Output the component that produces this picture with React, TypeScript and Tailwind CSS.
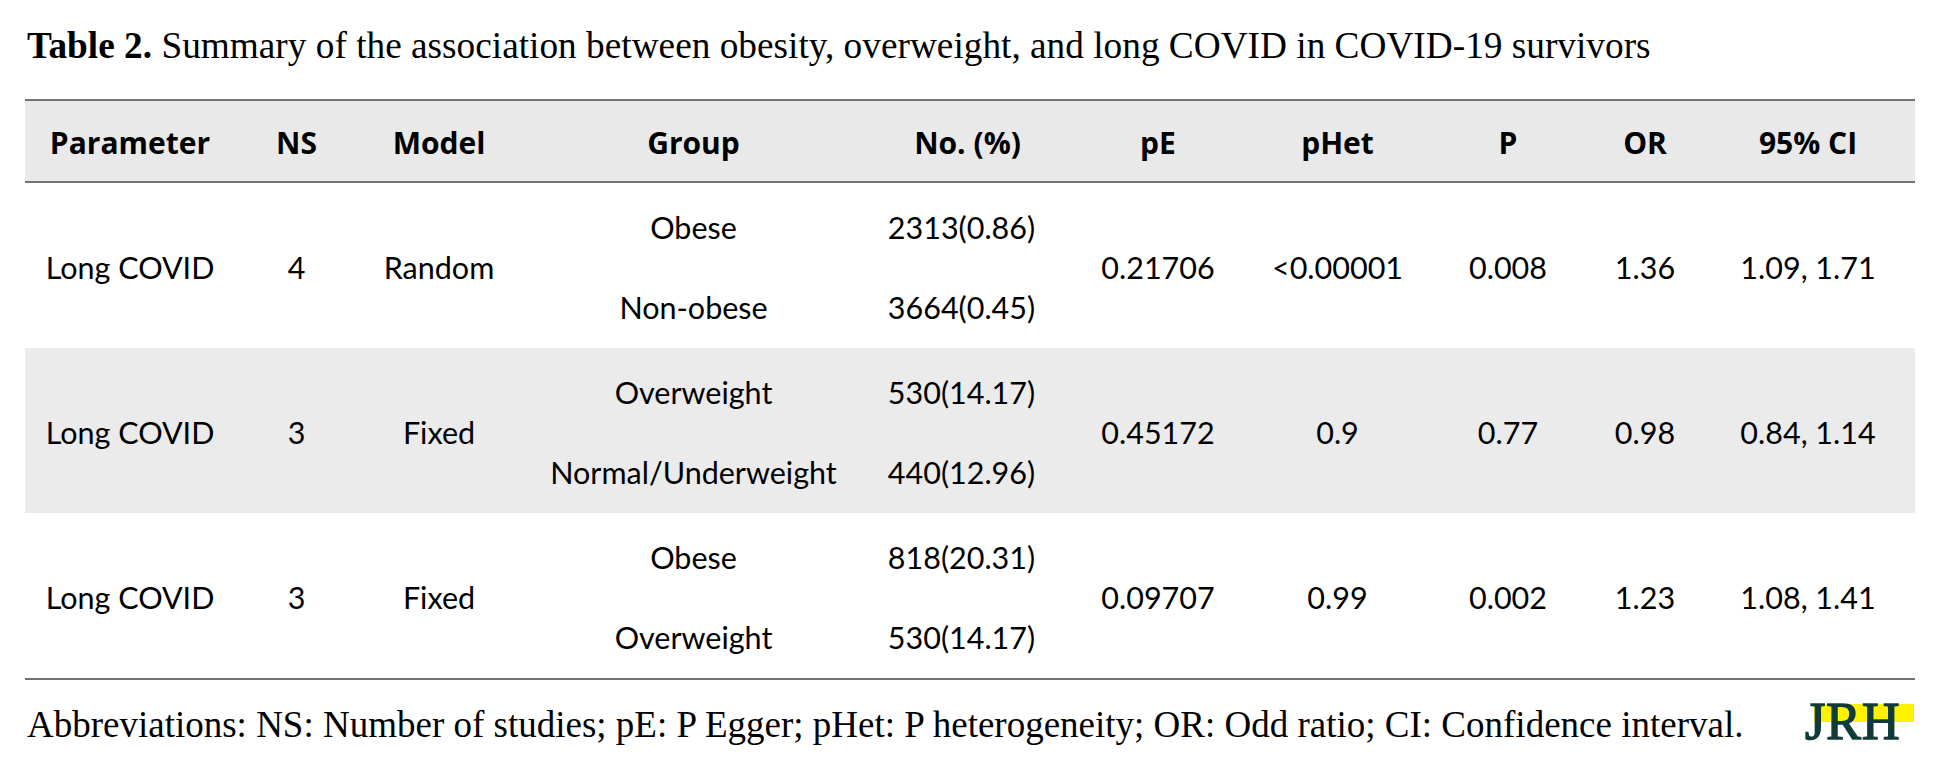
import React from "react";

type Row = {
  param: string;
  ns: string;
  model: string;
  groups: [string, string][];
  pe: string;
  phet: string;
  p: string;
  or: string;
  ci: string;
  shaded: boolean;
};

const rows: Row[] = [
  {
    param: "Long COVID",
    ns: "4",
    model: "Random",
    groups: [
      ["Obese", "2313(0.86)"],
      ["Non-obese", "3664(0.45)"],
    ],
    pe: "0.21706",
    phet: "<0.00001",
    p: "0.008",
    or: "1.36",
    ci: "1.09, 1.71",
    shaded: false,
  },
  {
    param: "Long COVID",
    ns: "3",
    model: "Fixed",
    groups: [
      ["Overweight", "530(14.17)"],
      ["Normal/Underweight", "440(12.96)"],
    ],
    pe: "0.45172",
    phet: "0.9",
    p: "0.77",
    or: "0.98",
    ci: "0.84, 1.14",
    shaded: true,
  },
  {
    param: "Long COVID",
    ns: "3",
    model: "Fixed",
    groups: [
      ["Obese", "818(20.31)"],
      ["Overweight", "530(14.17)"],
    ],
    pe: "0.09707",
    phet: "0.99",
    p: "0.002",
    or: "1.23",
    ci: "1.08, 1.41",
    shaded: false,
  },
];

const headers = ["Parameter", "NS", "Model", "Group", "No. (%)", "pE", "pHet", "P", "OR", "95% CI"];

const cols = "grid grid-cols-[210px_123px_162px_347px_201px_180px_179px_162px_112px_214px]";

// journal mark: dark serif letters with a yellow band across the top half
function JrhLogo() {
  return (
    <svg width="114" height="54" viewBox="0 0 114 54" className="shrink-0">
      <rect x="12" y="13" width="100" height="18" fill="#fff200" />
      <text
        x="3"
        y="48"
        fontFamily="'Liberation Serif', serif"
        fontSize="52"
        letterSpacing="1"
        fill="#0f3b3a"
        stroke="#0f3b3a"
        strokeWidth="1.5"
      >
        JRH
      </text>
    </svg>
  );
}

export default function App() {
  return (
    <div className="w-[1948px] h-[780px] bg-white text-black overflow-hidden">
      {/* Caption */}
      <div className="h-[99px] pl-[27px] pt-[27px] font-['Liberation_Serif',serif] text-[37.3px] leading-[37px] whitespace-nowrap">
        <span className="font-bold">Table 2.</span> Summary of the association between obesity, overweight, and long COVID in COVID-19 survivors
      </div>

      {/* Table */}
      <div className="ml-[25px] w-[1890px] font-['Lato',sans-serif] text-[30.5px]">
        <div className="h-[2px] bg-[#727272]" />
        <div className={`${cols} h-[80px] bg-[#e9e9e9] font-['Open_Sans',sans-serif] text-[30px] font-bold items-center pt-[2px]`}>
          {headers.map((h) => (
            <div key={h} className="text-center">
              {h}
            </div>
          ))}
        </div>
        <div className="h-[2px] bg-[#727272]" />

        {rows.map((r, i) => (
          <div key={i} className={`${cols} h-[165px] pt-[5px] ${r.shaded ? "bg-[#ebebeb]" : "bg-white"}`}>
            <div className="flex items-center justify-center">{r.param}</div>
            <div className="flex items-center justify-center">{r.ns}</div>
            <div className="flex items-center justify-center">{r.model}</div>
            <div className="flex flex-col">
              {r.groups.map(([g]) => (
                <div key={g} className="flex-1 flex items-center justify-center">
                  {g}
                </div>
              ))}
            </div>
            <div className="flex flex-col pr-3">
              {r.groups.map(([g, n]) => (
                <div key={g} className="flex-1 flex items-center justify-center">
                  {n}
                </div>
              ))}
            </div>
            <div className="flex items-center justify-center">{r.pe}</div>
            <div className="flex items-center justify-center">{r.phet}</div>
            <div className="flex items-center justify-center">{r.p}</div>
            <div className="flex items-center justify-center">{r.or}</div>
            <div className="flex items-center justify-center">{r.ci}</div>
          </div>
        ))}
        <div className="h-[2px] bg-[#727272]" />
      </div>

      {/* Footnote */}
      <div className="flex items-start justify-between pl-[27px] pr-[32px] pt-[11px]">
        <p className="mt-[12px] font-['Liberation_Serif',serif] text-[37px] leading-[44px] whitespace-nowrap">
          Abbreviations: NS: Number of studies; pE: P Egger; pHet: P heterogeneity; OR: Odd ratio; CI: Confidence interval.
        </p>
        <JrhLogo />
      </div>
    </div>
  );
}
